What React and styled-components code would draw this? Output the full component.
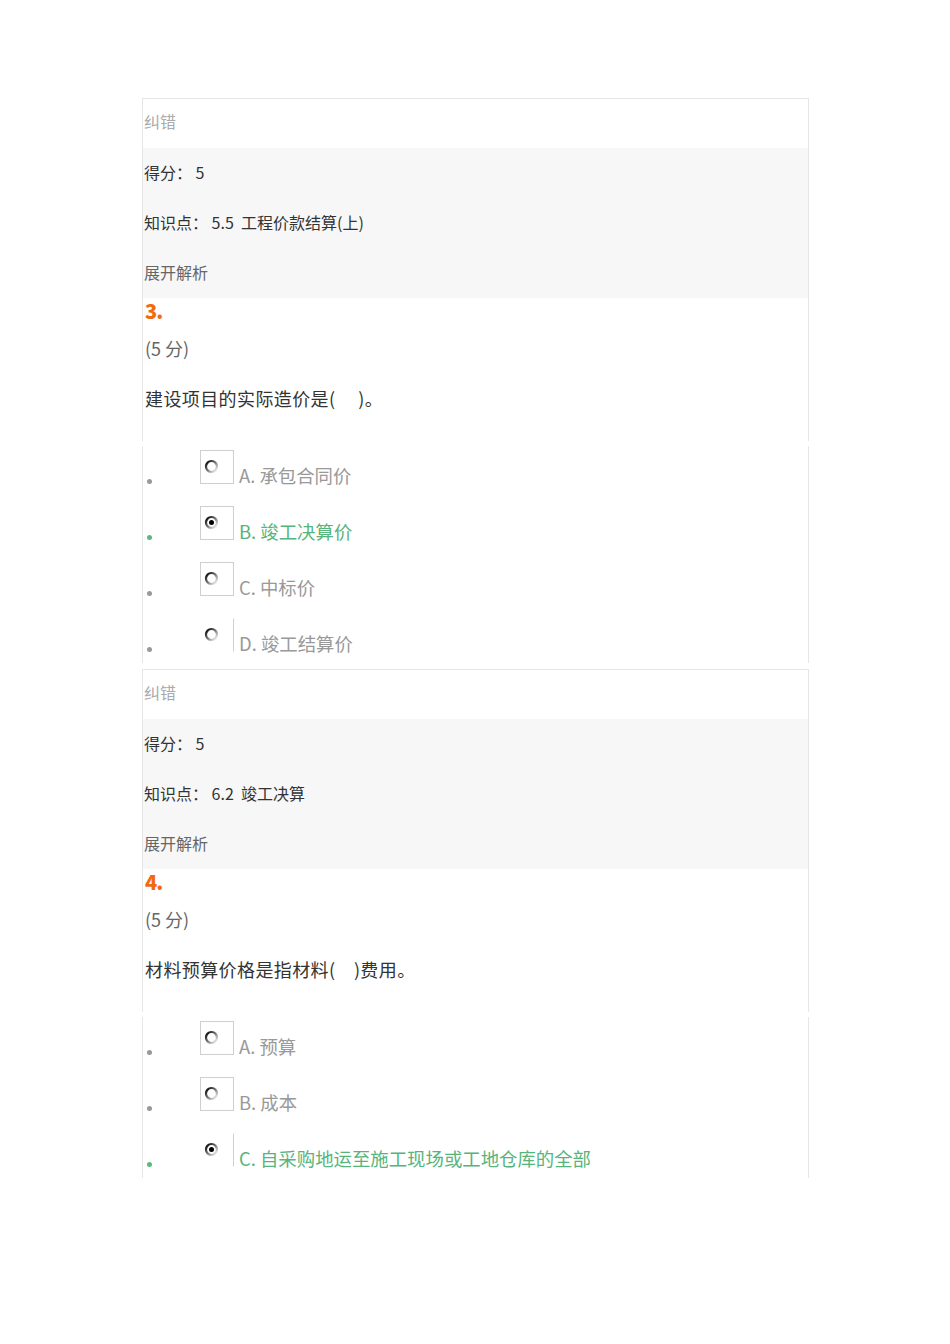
import React from 'react';
import styled, { createGlobalStyle } from 'styled-components';

const GlobalStyle = createGlobalStyle`
	body {
		margin: 0;
		background: #fff;
		font-family: "Noto Sans CJK SC", "Noto Sans", sans-serif;
	}
`;

const questions = [
	{
		num: '3.',
		score: 5,
		point: '5.5  工程价款结算(上)',
		text: '建设项目的实际造价是(\u3000 )。',
		options: [
			{ key: 'A', label: '承包合同价' },
			{ key: 'B', label: '竣工决算价', picked: true },
			{ key: 'C', label: '中标价' },
			{ key: 'D', label: '竣工结算价' },
		],
	},
	{
		num: '4.',
		score: 5,
		point: '6.2  竣工决算',
		text: '材料预算价格是指材料(\u3000)费用。',
		options: [
			{ key: 'A', label: '预算' },
			{ key: 'B', label: '成本' },
			{ key: 'C', label: '自采购地运至施工现场或工地仓库的全部', picked: true },
		],
	},
];

function Radio({ picked }) {
	return (
		<svg width="15" height="15" viewBox="0 0 15 15">
			<defs>
				<linearGradient id="ring" x1="0.1" y1="0.1" x2="0.9" y2="0.9">
					<stop offset="0" stopColor="#111" />
					<stop offset="0.5" stopColor="#777" />
					<stop offset="1" stopColor="#e8e8e8" />
				</linearGradient>
			</defs>
			<circle cx="7.5" cy="7.5" r="5.5" fill="#fff" stroke="url(#ring)" strokeWidth="2.2" />
			{picked && <circle cx="7.5" cy="7.5" r="2.5" fill="#000" />}
		</svg>
	);
}

function Question({ q }) {
	return (
		<Card>
			<Header>
				<FixLink>纠错</FixLink>
				<Meta>
					<MetaRow>得分： {q.score}</MetaRow>
					<MetaRow>知识点： {q.point}</MetaRow>
					<MetaRow $muted>展开解析</MetaRow>
				</Meta>
			</Header>
			<Body>
				<Num>{q.num}</Num>
				<Points>(5 分)</Points>
				<Stem>{q.text}</Stem>
			</Body>
			<Options>
				{q.options.map((o, i) => {
					const last = i === q.options.length - 1;
					return (
						<Option key={o.key} $last={last}>
							<Dot $picked={o.picked} />
							<RadioBox $edge={last}>
								<Radio picked={o.picked} />
							</RadioBox>
							<Label $picked={o.picked}>
								{o.key}. {o.label}
							</Label>
						</Option>
					);
				})}
			</Options>
		</Card>
	);
}

export default function App() {
	return (
		<>
			<GlobalStyle />
			<Page>
				{questions.map((q) => (
					<Question key={q.num} q={q} />
				))}
			</Page>
		</>
	);
}

const Page = styled.div`
	padding: 98px 0 0 142px;
	width: 667px;
	display: flex;
	flex-direction: column;
	gap: 6px;
`;

const Card = styled.section`
	display: flex;
	flex-direction: column;
`;

const Header = styled.div`
	border: 1px solid #e6e6e6;
	border-bottom: none;
`;

const FixLink = styled.div`
	height: 49px;
	line-height: 45px;
	padding-left: 1px;
	font-size: 16px;
	color: #aaa;
`;

const Meta = styled.div`
	background: #f7f7f7;
`;

const MetaRow = styled.div`
	height: 50px;
	line-height: 48px;
	padding-left: 1px;
	font-size: 16px;
	white-space: pre;
	color: ${(p) => (p.$muted ? '#666' : '#333')};
`;

const Body = styled.div`
	border-left: 1px solid #e6e6e6;
	border-right: 1px solid #e6e6e6;
	padding: 0 0 15px 2px;
`;

const Num = styled.div`
	height: 28px;
	line-height: 26px;
	font-size: 20px;
	font-weight: 800;
	letter-spacing: -1px;
	color: #f26a10;
`;

const Points = styled.div`
	height: 46px;
	line-height: 44px;
	font-size: 18px;
	color: #666;
`;

const Stem = styled.div`
	height: 54px;
	line-height: 52px;
	font-size: 18px;
	letter-spacing: 0.4px;
	white-space: pre;
	color: #333;
`;

const Options = styled.ul`
	margin: 5px 0 0;
	padding: 0;
	list-style: none;
	border-left: 1px solid #e6e6e6;
	border-right: 1px solid #e6e6e6;
`;

const Option = styled.li`
	display: flex;
	align-items: flex-start;
	height: ${(p) => (p.$last ? '49px' : '56px')};
`;

const Dot = styled.span`
	width: 5px;
	height: 5px;
	border-radius: 50%;
	margin: 33px 0 0 4px;
	background: ${(p) => (p.$picked ? '#5cb87e' : '#999')};
	flex-shrink: 0;
`;

const RadioBox = styled.span`
	box-sizing: border-box;
	width: 34px;
	height: 34px;
	margin: 4px 0 0 48px;
	padding: 8px 0 0 3px;
	border: 1px solid ${(p) => (p.$edge ? 'transparent' : '#cfcfcf')};
	border-right-color: #cfcfcf;
	flex-shrink: 0;

	svg {
		display: block;
	}
`;

const Label = styled.span`
	margin: 17px 0 0 5px;
	line-height: 24px;
	font-size: 18.4px;
	color: ${(p) => (p.$picked ? '#56b47c' : '#999')};
	white-space: nowrap;
`;
